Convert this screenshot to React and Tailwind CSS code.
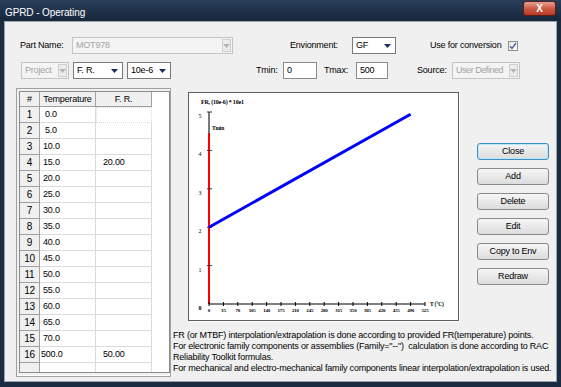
import React from 'react';

// Datos de la tabla
const rows = [
  ['0.0', ''], ['5.0', ''], ['10.0', ''], ['15.0', '20.00'], ['20.0', ''], ['25.0', ''],
  ['30.0', ''], ['35.0', ''], ['40.0', ''], ['45.0', ''], ['50.0', ''], ['55.0', ''],
  ['60.0', ''], ['65.0', ''], ['70.0', ''], ['500.0', '50.00'],
];

const xLabels = [0, 35, 70, 105, 140, 175, 210, 245, 280, 315, 350, 385, 420, 455, 490, 525];

function Arrow({ color }) {
  return (
    <svg width="7" height="4" viewBox="0 0 7 4">
      <path d="M0 0H7L3.5 4Z" fill={color} />
    </svg>
  );
}

function Combo({ value, className, disabled }) {
  if (disabled) {
    return (
      <div className={`flex h-[17px] items-stretch overflow-hidden whitespace-nowrap border border-[#c4c4c4] bg-[#f4f4f4] text-[#a3a3a3] ${className}`}>
        <span className="flex-1 pl-[3px] leading-[15px]">{value}</span>
        <span className="m-[1px] flex w-[9px] shrink-0 items-center justify-center border border-[#cfcfcf] bg-[#ececec]">
          <Arrow color="#b5b5b5" />
        </span>
      </div>
    );
  }
  return (
    <div className={`flex h-[17px] items-center whitespace-nowrap border border-[#7a7a7a] bg-white text-black ${className}`}>
      <span className="flex-1 pl-[3px]">{value}</span>
      <span className="pr-[4px]">
        <Arrow color="#1d2b6b" />
      </span>
    </div>
  );
}

function Btn({ label, primary }) {
  return (
    <button
      className={`h-[17px] w-[72px] rounded-[3px] border bg-gradient-to-b from-[#f6f6f6] to-[#dcdcdc] text-black leading-[15px] ${
        primary ? 'border-[#3c8fc6] shadow-[inset_0_0_0_1px_#bfe6f8]' : 'border-[#8a8a8a]'
      }`}
    >
      {label}
    </button>
  );
}

function Chart() {
  const px = (t) => 20 + t * (14.4 / 35);
  const py = (v) => 211 - v * 38.4;
  return (
    <svg width="269" height="227" viewBox="0 0 269 227" className="block">
      <text x="12" y="11" fontFamily="Liberation Serif, serif" fontSize="6" fontWeight="bold">FR, (10e-6) * 10e1</text>
      {/* eje y */}
      <line x1="20" y1="19" x2="20" y2="40" stroke="#7a7a7a" strokeWidth="2" />
      <line x1="20" y1="40" x2="20" y2="211" stroke="#ff0000" strokeWidth="2" />
      <text x="23" y="37" fontFamily="Liberation Serif, serif" fontSize="5.5" fontWeight="bold">Tmin</text>
      {[5, 4, 3, 2, 1].map((v) => (
        <g key={v}>
          <line x1="18" y1={py(v)} x2="23" y2={py(v)} stroke="#333" strokeWidth="1" />
          <text x="11" y={py(v) + 6} textAnchor="middle" fontFamily="Liberation Serif, serif" fontSize="6">{v}</text>
        </g>
      ))}
      <text x="11" y="217" textAnchor="middle" fontFamily="Liberation Serif, serif" fontSize="6" fontWeight="bold">0</text>
      {/* eje x */}
      <line x1="20" y1="211" x2="236" y2="211" stroke="#000" strokeWidth="1" />
      {xLabels.map((t) => (
        <g key={t}>
          <line x1={px(t)} y1="209" x2={px(t)} y2="213" stroke="#000" strokeWidth="1" />
          <text x={px(t)} y="219" textAnchor="middle" fontFamily="Liberation Serif, serif" fontSize="5" fontWeight="bold">{t}</text>
        </g>
      ))}
      <text x="241" y="213" fontFamily="Liberation Serif, serif" fontSize="5.5" fontWeight="bold">T (°C)</text>
      {/* curva */}
      <line x1="20" y1={py(2)} x2={px(490)} y2={py(4.94)} stroke="#0000ff" strokeWidth="3" />
    </svg>
  );
}

export default function App() {
  return (
    <div className="flex h-[387px] w-[561px] flex-col bg-[#1b2b42] font-['Liberation_Sans',Arial,sans-serif] text-[9px] tracking-[-0.2px] text-black">
      {/* Barra de titulo */}
      <div className="flex h-[21px] items-start justify-between bg-gradient-to-b from-[#2b3e5a] to-[#17263b] pl-[5px] pr-[5px]">
        <span className="mt-[5px] text-[10px] tracking-[-0.1px] text-white">GPRD - Operating</span>
        <div className="mt-[1px] flex h-[15px] w-[33px] items-center justify-center rounded-[3px] border border-[#5a1d16] bg-gradient-to-b from-[#e4a091] via-[#cc5a45] to-[#b53a25]">
          <span className="text-[10px] font-bold leading-none text-white">X</span>
        </div>
      </div>

      {/* Contenido */}
      <div className="mx-[4px] mb-[5px] flex flex-1 flex-col border border-[#9aa3b0] bg-[#f0f0f0]">
        {/* Fila 1 */}
        <div className="mt-[15px] flex h-[17px] items-center whitespace-nowrap">
          <span className="ml-[15px] w-[52px]">Part Name:</span>
          <Combo value="MOT978" className="w-[161px]" disabled />
          <span className="ml-[57px] w-[62px]">Envionment:</span>
          <Combo value="GF" className="w-[44px]" />
          <span className="ml-[34px] w-[78px]">Use for conversion</span>
          <div className="flex h-[10px] w-[10px] items-center justify-center border border-[#8e8f8f] bg-gradient-to-br from-[#e6e6e6] to-[#ffffff]">
            <svg width="8" height="8" viewBox="0 0 8 8">
              <path d="M1 4.2L3 6.5L7 1" fill="none" stroke="#4a5f9e" strokeWidth="1.4" />
            </svg>
          </div>
        </div>

        {/* Fila 2 */}
        <div className="mt-[8px] flex h-[17px] items-center whitespace-nowrap">
          <Combo value="Project" className="ml-[16px] w-[48px]" disabled />
          <Combo value="F. R." className="ml-[4px] w-[50px]" />
          <Combo value="10e-6" className="ml-[4px] w-[44px]" />
          <span className="ml-[85px] w-[27px]">Tmin:</span>
          <div className="h-[17px] w-[34px] border border-[#8a8a8a] bg-white pl-[3px] leading-[15px]">0</div>
          <span className="ml-[7px] w-[32px]">Tmax:</span>
          <div className="h-[17px] w-[32px] border border-[#8a8a8a] bg-white pl-[3px] leading-[15px]">500</div>
          <span className="ml-[29px] w-[35px]">Source:</span>
          <Combo value="User Defined" className="w-[68px] tracking-[-0.45px]" disabled />
        </div>

        {/* Zona principal */}
        <div className="mt-[9px] flex">
          {/* Tabla */}
          <div className="ml-[11px] h-[289px] w-[155px] border border-[#a0a0a0] shadow-[inset_-1px_-1px_0_#ffffff] pl-[2px] pt-[2px]">
            <div className="h-[282px] w-[151px] overflow-hidden border border-[#8c8c8c] bg-white">
              <div className="flex h-[15px]">
                <div className="w-[20px] border-b border-r border-[#a0a0a0] bg-[#f0f0f0] text-center leading-[15px]">#</div>
                <div className="w-[56px] border-b border-r border-[#a0a0a0] bg-[#f0f0f0] text-center leading-[15px]">Temperature</div>
                <div className="w-[56px] border-b border-r border-[#a0a0a0] bg-[#f0f0f0] text-center leading-[15px]">F. R.</div>
              </div>
              {rows.map(([t, fr], i) => (
                <div key={i} className="flex h-[16px]">
                  <div className="w-[20px] border-b border-r border-[#a0a0a0] bg-[#f0f0f0] text-center text-[10px] leading-[16px]">{i + 1}</div>
                  <div className={`w-[56px] border-b border-r border-[#dcdcdc] leading-[15px] ${i < 2 ? 'pl-[5px]' : i === 15 ? 'pl-[1px]' : 'pl-[3px]'}`}>{t}</div>
                  <div className={`w-[56px] border-b border-r border-[#dcdcdc] pl-[7px] leading-[15px] ${i === 0 ? 'border border-dotted border-[#555]' : ''}`}>{fr}</div>
                </div>
              ))}
              <div className="flex h-[16px]">
                <div className="w-[20px] border-r border-[#a0a0a0] bg-[#f0f0f0]"></div>
                <div className="w-[56px] border-r border-[#dcdcdc]"></div>
                <div className="w-[56px] border-r border-[#dcdcdc]"></div>
              </div>
            </div>
          </div>

          {/* Grafico, botones y notas */}
          <div className="ml-[2px] flex flex-col">
            <div className="flex">
              <div className="ml-[15px] mt-[4px] h-[229px] w-[271px] border border-[#5e5e5e] bg-white shadow-[1px_1px_0_#ffffff]">
                <Chart />
              </div>
              <div className="ml-[18px] mt-[55px] flex flex-col gap-[8px]">
                <Btn label="Close" primary />
                <Btn label="Add" />
                <Btn label="Delete" />
                <Btn label="Edit" />
                <Btn label="Copy to Env" />
                <Btn label="Redraw" />
              </div>
            </div>
            <div className="mt-[9px] whitespace-pre leading-[11px]">
              <div>FR (or MTBF) interpolation/extrapolation is done according to provided FR(temperature) points.</div>
              <div>For electronic family components or assemblies (Family="--")  calculation is done according to RAC</div>
              <div>Reliability Toolkit formulas.</div>
              <div>For mechanical and electro-mechanical family components linear interpolation/extrapolation is used.</div>
            </div>
          </div>
        </div>
      </div>
    </div>
  );
}
